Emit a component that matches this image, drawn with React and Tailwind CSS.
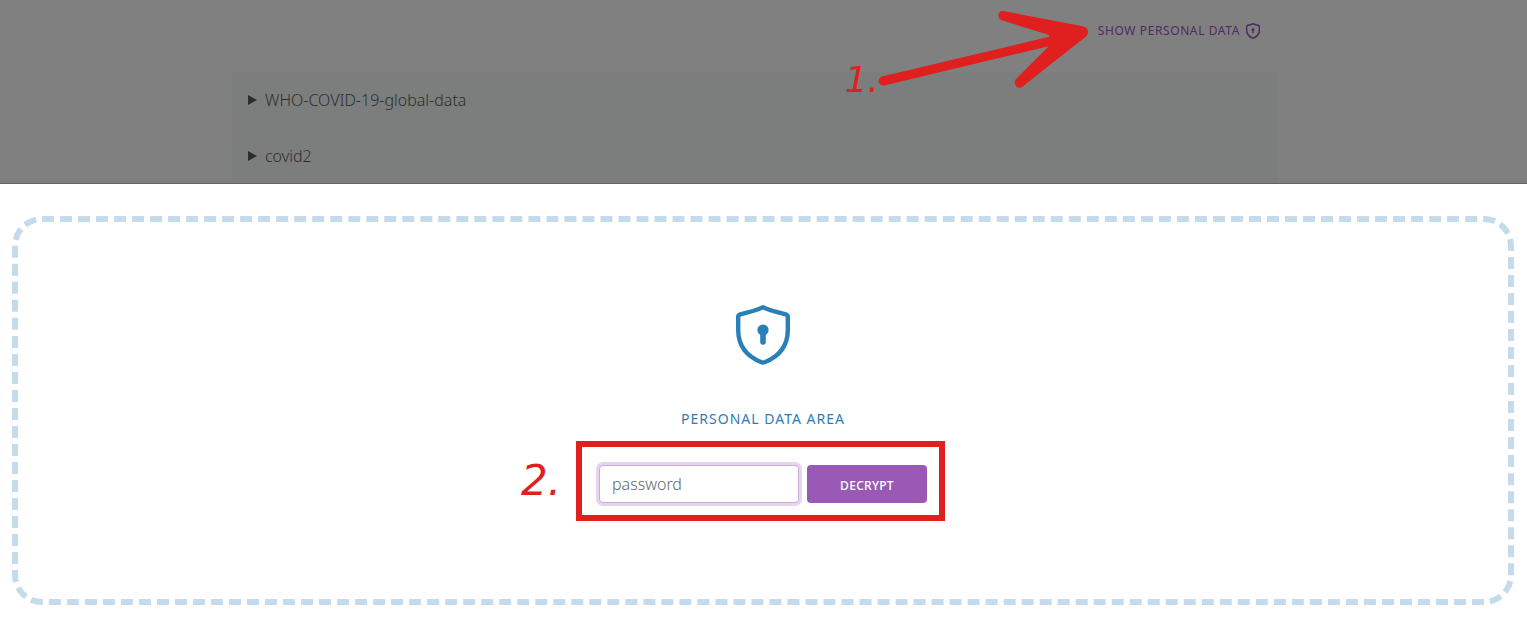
import React from "react";

function ShieldLock({ className, strokeWidth }) {
  return (
    <svg viewBox="0 0 54 60" className={className} fill="none" aria-hidden="true">
      <path
        d="M27 2.3C19.5 5.6 11 7.8 4.2 9.3C2.8 9.7 2.2 10.4 2.2 11.8V25C2.2 41 11 51.5 25.5 57.3Q27 57.9 28.500 57.3C43 51.5 51.8 41 51.8 25V11.800C51.8 10.4 51.2 9.7 49.8 9.3C43 7.8 34.5 5.600 27 2.300Z"
        stroke="currentColor"
        strokeWidth={strokeWidth}
        strokeLinejoin="round"
      />
      <circle cx="27" cy="25" r="5.600" fill="currentColor" />
      <path d="M27 26V37" stroke="currentColor" strokeWidth="5.600" strokeLinecap="round" />
    </svg>
  );
}

function Dataset({ name }) {
  return (
    <details className="rounded bg-[#7b7e7c] px-4 py-4 last:rounded-b-none last:pb-[15px]">
      <summary className="flex cursor-pointer list-none items-center gap-2 leading-6">
        <svg viewBox="0 0 9 10" className="h-2.5 w-[9px]" aria-hidden="true">
          <path d="M0 0L9 5L0 10Z" fill="#2a2d2d" />
        </svg>
        {name}
      </summary>
    </details>
  );
}

function Arrow() {
  return (
    <svg
      viewBox="0 0 220 90"
      className="pointer-events-none absolute top-0 right-[437px] h-[90px] w-[220px]"
      fill="#e01f1f"
      aria-hidden="true"
    >
      <path d="M13 81L185 40" stroke="#e01f1f" strokeWidth="9" strokeLinecap="round" />
      <path d="M133 11L214 26.500C218.500 28 219.500 33 216 36.500L152 87C147 89.500 143 84 145.500 79.500L181 44L179 35L131 20C126.500 17 128 11 133 11Z" />
    </svg>
  );
}

export default function App() {
  return (
    <div className="font-['Noto_Sans','Open_Sans',sans-serif] bg-white text-[#2b2e2f]">
      <header className="relative border-b border-[#636363] bg-[#808080] pr-[17px]">
        <div className="mx-auto max-w-[1046px]">
          <div className="flex h-[72px] items-start justify-end px-[18px] pt-[21px]">
            <button
              type="button"
              className="flex items-center gap-1.5 text-xs leading-5 tracking-wider text-[#4f2c5e] uppercase"
            >
              Show personal data
              <ShieldLock className="h-4 w-3.5" strokeWidth="6" />
            </button>
          </div>
          <div className="text-base font-light">
            <Dataset name="WHO-COVID-19-global-data" />
            <Dataset name="covid2" />
          </div>
        </div>
        <Arrow />
        <span className="absolute top-[60px] right-[648px] font-['DejaVu_Sans'] text-4xl leading-10 italic font-extralight text-[#e01f1f]">
          1.
        </span>
      </header>

      <main className="pt-8 pr-[13px] pb-7 pl-3">
        <section className="flex flex-col items-center rounded-[30px] border-6 border-dashed border-[#c4dbeb] pt-[83px] pb-24">
          <ShieldLock className="h-[60px] w-[54px] text-[#2980b9]" strokeWidth="4.400" />
          <h1 className="mt-11 text-sm leading-5 tracking-[1px] text-[#2f7cb5] uppercase">
            Personal data area
          </h1>
          <form className="relative mt-9 flex gap-2" onSubmit={(e) => e.preventDefault()}>
            <input
              type="password"
              aria-label="password"
              placeholder="password"
              className="h-[38px] w-[200px] rounded border border-[#cdacdc] bg-white px-3 text-base font-light ring-3 ring-[#e6d5ed] outline-none placeholder:text-[#5d6a70]"
            />
            <button
              type="submit"
              className="h-[38px] w-[120px] rounded bg-[#9b59b6] pt-1 text-xs font-medium tracking-wide text-white uppercase"
            >
              Decrypt
            </button>
            <div className="pointer-events-none absolute -top-6 -right-[18px] -bottom-[18px] -left-[23px] border-6 border-[#e01f1f]" />
            <span className="absolute -top-1 right-[366px] font-['DejaVu_Sans'] text-[42px] leading-10 italic font-extralight text-[#e01f1f]">
              2.
            </span>
          </form>
        </section>
      </main>
    </div>
  );
}
